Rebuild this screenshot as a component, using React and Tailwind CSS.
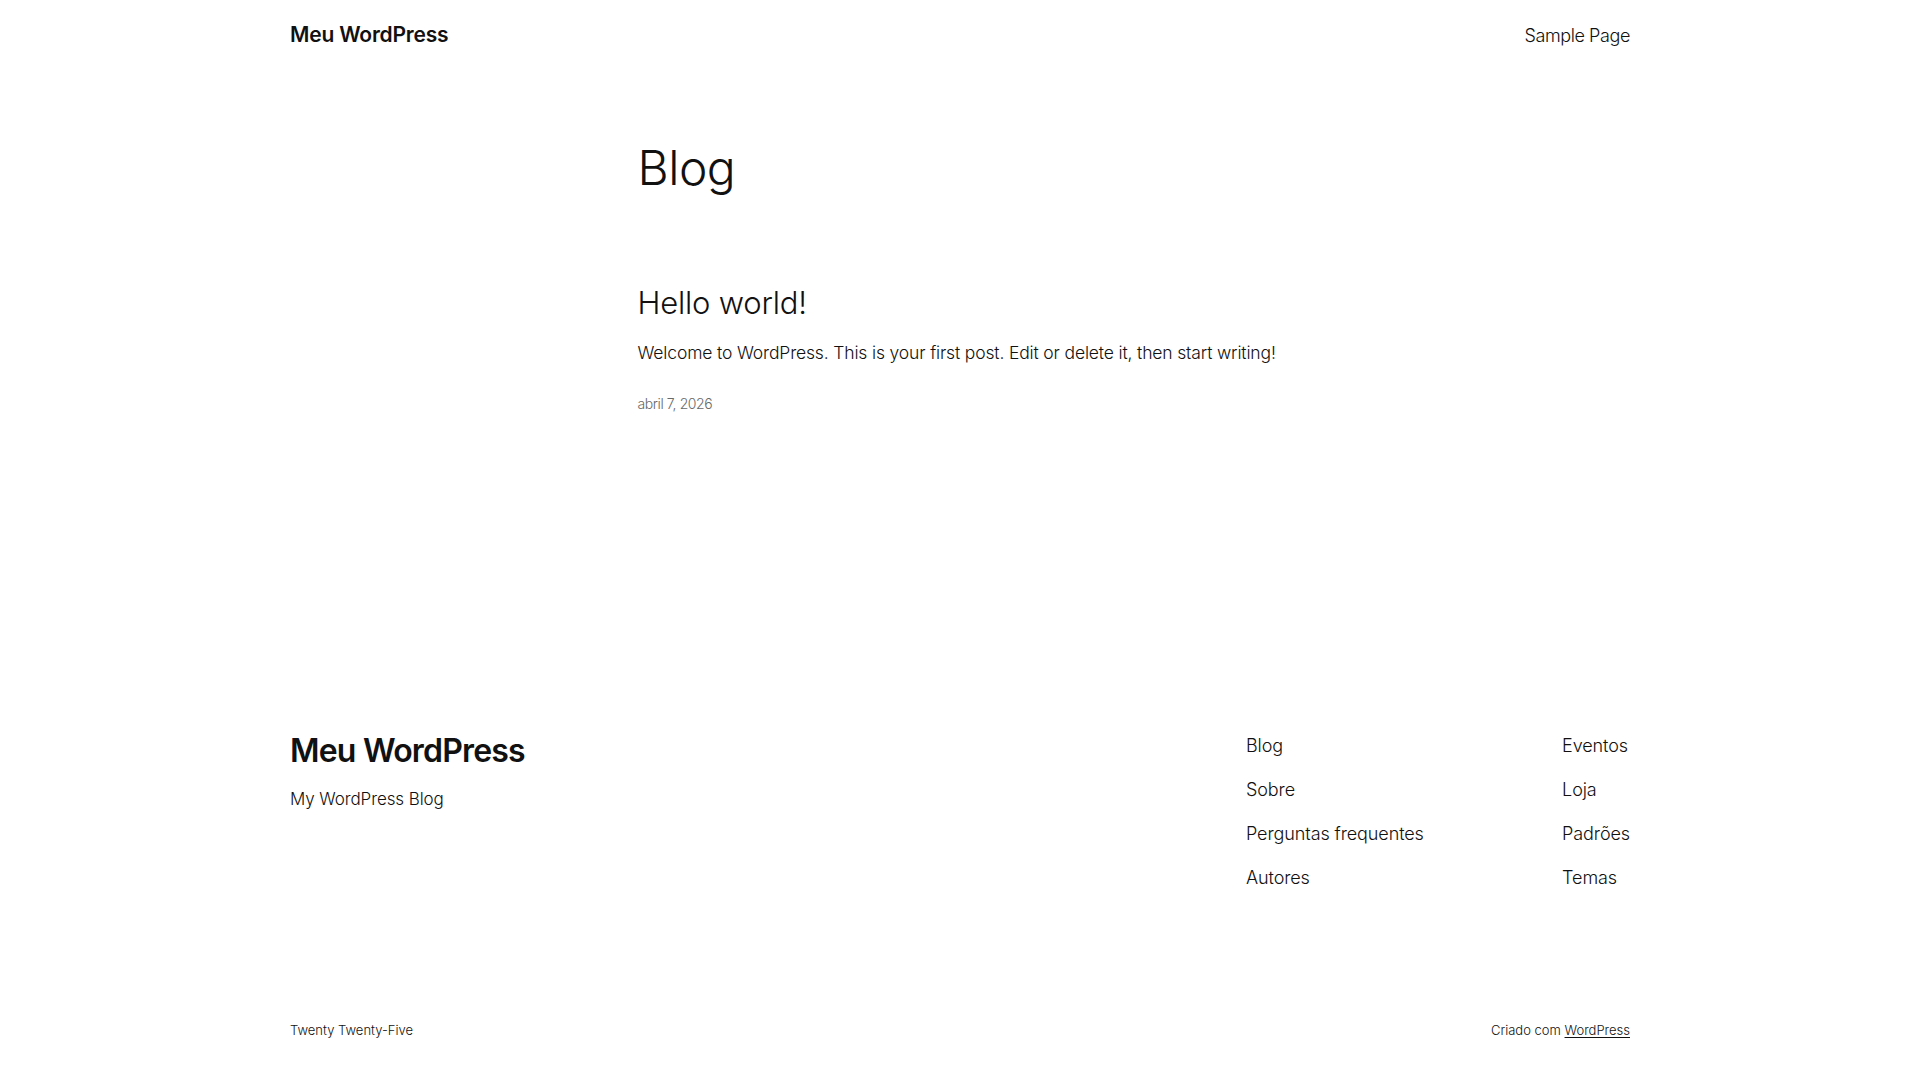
import React from 'react';

const FOOTER_LINKS = [
  ['Blog', 'Sobre', 'Perguntas frequentes', 'Autores'],
  ['Eventos', 'Loja', 'Padrões', 'Temas'],
];

export default function App() {
  return (
    <div className="h-[1080px] bg-white text-[#111111] font-['Inter','Liberation_Sans',sans-serif] flex flex-col">
      {/* header */}
      <header className="w-[1340px] mx-auto h-[70px] shrink-0 flex items-center justify-between">
        <a className="text-[21px] font-semibold tracking-[-0.2px]">Meu WordPress</a>
        <nav className="text-[18px] font-light tracking-[-0.4px]">Sample Page</nav>
      </header>

      {/* main */}
      <main className="w-[645px] mx-auto pt-[69px] flex-1">
        <h1 className="text-[48px] leading-[1.2] font-light tracking-[-0.5px]">Blog</h1>
        <article className="mt-[87px]">
          <h2 className="text-[31px] leading-[1.2] font-light tracking-[-0.2px]">Hello world!</h2>
          <p className="mt-[20px] text-[17.5px] leading-[1.4] font-light tracking-[-0.15px] whitespace-nowrap">
            Welcome to WordPress. This is your first post. Edit or delete it, then start writing!
          </p>
          <div className="mt-[29px] text-[14px] leading-[1.4] font-light tracking-[-0.4px] text-[#686868]">abril 7, 2026</div>
        </article>
      </main>

      {/* footer */}
      <footer className="w-[1340px] mx-auto shrink-0">
        <div className="flex justify-between">
          <div>
            <div className="text-[32px] leading-[1.2] font-semibold tracking-[-0.8px]">Meu WordPress</div>
            <div className="mt-[18px] text-[17px] leading-[1.4] font-light tracking-[-0.1px]">My WordPress Blog</div>
          </div>
          <div className="w-[384px] flex pt-[1px]">
            {FOOTER_LINKS.map((col, i) => (
              <ul key={i} className={i === 0 ? 'w-[320px] flex flex-col gap-[19px]' : 'flex flex-col gap-[19px]'}>
                {col.map((item) => (
                  <li key={item} className="text-[18px] leading-[25px] font-light tracking-[-0.1px]">{item}</li>
                ))}
              </ul>
            ))}
          </div>
        </div>
        <div className="mt-[131px] mb-[41px] flex justify-between text-[13px] leading-[1.4] font-light">
          <span>Twenty Twenty-Five</span>
          <span>
            Criado com <a className="underline underline-offset-2">WordPress</a>
          </span>
        </div>
      </footer>
    </div>
  );
}
